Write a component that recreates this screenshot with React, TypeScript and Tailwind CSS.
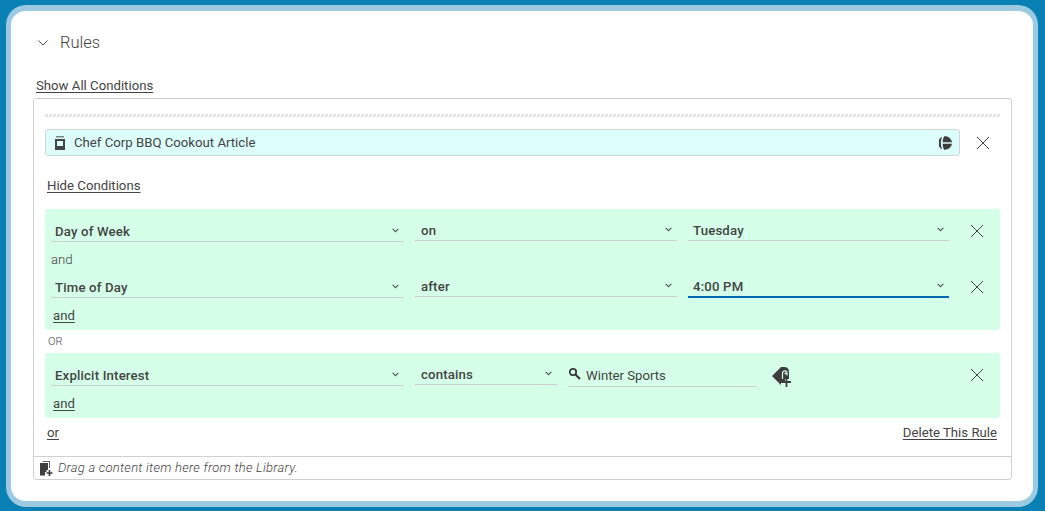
import React from "react";

const Chevron = ({ className = "" }: { className?: string }) => (
  <svg width="7" height="5" viewBox="0 0 7 5" fill="none" stroke="#555" strokeWidth="1.1" className={className}>
    <path d="M0.6 0.8 L3.5 3.7 L6.4 0.8" />
  </svg>
);

const Close = ({ className = "" }: { className?: string }) => (
  <svg width="14" height="14" viewBox="0 0 14 14" fill="none" stroke="#444" strokeWidth="1" className={className}>
    <path d="M1 1 L13 13 M13 1 L1 13" />
  </svg>
);

function Select({ label, w, h = "h-[23px]", active = false, ml = "pl-[5px]", lift = "pb-[1px]" }: { label: string; w: string; h?: string; active?: boolean; ml?: string; lift?: string }) {
  return (
    <div
      className={`${w} ${h} flex items-center justify-between pr-[5px] ${ml} ${lift} shrink-0 ${
        active ? "border-b-2 border-[#0068b0]" : "border-b border-[#cfcfcf]"
      }`}
    >
      <span className="text-[13.2px] text-[#444] leading-[20px] font-medium tracking-[0.17px]">{label}</span>
      <Chevron className="mb-[3px]" />
    </div>
  );
}

function Cond({ children }: { children: React.ReactNode }) {
  return <div className="flex items-start pl-[6px]">{children}</div>;
}

export default function App() {
  return (
    <div
      className="w-[1045px] h-[511px] bg-[#0a80b5] pt-[5px] pl-[6px] pr-[7px] pb-[4px] overflow-hidden text-[#444]"
      style={{ fontFamily: "Roboto, sans-serif" }}
    >
      <div className="h-full border-x-[5px] border-y-[6px] border-[#9ccbe1] rounded-[20px] bg-white pl-[22px] pr-[21px]">
        <div className="flex items-center h-[24px] mt-[20px] ml-[5px]">
          <svg width="10" height="6" viewBox="0 0 10 6" fill="none" stroke="#555" strokeWidth="1">
            <path d="M0.5 0.5 L5 5 L9.5 0.5" />
          </svg>
          <span className="ml-[12px] text-[16.5px] font-light text-[#444] leading-[24px]">Rules</span>
        </div>
        <div className="mt-[21px] ml-[3px] h-[20px] text-[13.2px] leading-[20px] underline underline-offset-2">Show All Conditions</div>
        <div className="mt-[2px] h-[382px] border border-[#d0d0d0] rounded-[3px] flex flex-col">
          <div className="flex-1 px-[11px] pt-[14px]">
            <div
              className="h-[5px] w-[955px]"
              style={{ backgroundImage: "radial-gradient(circle at 1.5px 2.5px, #e4e4e4 1.5px, transparent 1.6px)", backgroundSize: "4px 5px" }}
            />
            <div className="flex items-center mt-[11px]">
              <div className="w-[915px] h-[27px] bg-[#ddfdfa] border border-[#cfd8d8] rounded-[3px] flex items-center pl-[9px] pr-[7px]">
                <svg width="10" height="14" viewBox="0 0 10 14" fill="#444">
                  <path d="M1 0 H9 V1.5 H1 Z" opacity="0.65" />
                  <path d="M0 3 H10 V14 H0 Z M2 5 V10 H8 V5 Z" fillRule="evenodd" />
                </svg>
                <span className="ml-[9px] text-[13.2px] leading-[20px] text-[#444]">Chef Corp BBQ Cookout Article</span>
                <svg width="13" height="14" viewBox="0 0 13 14" className="ml-auto" fill="#3d3d3d">
                  <path d="M3.2 0.8 A6.8 6.8 0 0 0 3.2 13.2 C2.3 11.4 1.9 9.4 1.9 7 C1.9 4.6 2.3 2.6 3.2 0.8 Z" />
                  <path d="M5.2 0.2 C4.2 2 3.7 4 3.6 6.3 H13 A7 7 0 0 0 5.2 0.2 Z" />
                  <path d="M3.6 7.7 C3.7 10 4.2 12 5.2 13.8 A7 7 0 0 0 13 7.7 Z" />
                </svg>
              </div>
              <Close className="ml-[16px]" />
            </div>
            <div className="mt-[20px] ml-[2px] h-[20px] text-[13.2px] leading-[20px] underline underline-offset-2">Hide Conditions</div>

            <div className="mt-[13px] w-[955px] h-[121px] bg-[#d5ffe8] rounded-[3px] pt-[10px]">
              <Cond>
                <Select label="Day of Week" w="w-[353px]" ml="pl-[4px]" h="h-[23px]" lift="pt-[3px]" />
                <div className="w-[11px]" />
                <Select label="on" w="w-[262px]" ml="pl-[6px]" h="h-[22px]" lift="pt-[2px]" />
                <div className="w-[11px]" />
                <Select label="Tuesday" w="w-[261px]" h="h-[22px]" lift="pt-[2px]" />
                <Close className="ml-[21px] mt-[5px]" />
              </Cond>
              <div className="pl-[6px] mt-[8px] h-[20px] text-[13.2px] leading-[20px] font-light">and</div>
              <div className="mt-[5px]">
                <Cond>
                  <Select label="Time of Day" w="w-[353px]" ml="pl-[4px]" lift="pt-[3px]" />
                  <div className="w-[11px]" />
                  <Select label="after" w="w-[262px]" ml="pl-[6px]" h="h-[22px]" lift="pt-[2px]" />
                  <div className="w-[11px]" />
                  <Select label="4:00 PM" w="w-[261px]" active h="h-[23px]" lift="pt-[3px]" />
                  <Close className="ml-[21px] mt-[5px]" />
                </Cond>
              </div>
              <div className="pl-[8px] mt-[8px] h-[20px] text-[13.2px] leading-[20px] underline underline-offset-2">and</div>
            </div>

            <div className="h-[23px] pl-[3px] text-[11px] leading-[24px] font-light">OR</div>

            <div className="w-[955px] h-[65px] bg-[#d5ffe8] rounded-[3px] pt-[10px]">
              <Cond>
                <Select label="Explicit Interest" w="w-[353px]" ml="pl-[4px]" lift="pt-[3px]" />
                <div className="w-[11px]" />
                <Select label="contains" w="w-[142px]" ml="pl-[6px]" h="h-[22px]" lift="pt-[2px]" />
                <div className="w-[11px]" />
                <div className="w-[189px] h-[24px] border-b border-[#cfcfcf] flex items-center shrink-0">
                  <svg width="13" height="13" viewBox="0 0 13 13" fill="none" stroke="#3d3d3d" className="mb-[3px]">
                    <circle cx="5" cy="5" r="3.2" strokeWidth="1.8" />
                    <path d="M7.5 7.5 L12 12" strokeWidth="2.2" />
                  </svg>
                  <span className="ml-[5px] mt-[2px] text-[13.2px] leading-[20px] text-[#444]">Winter Sports</span>
                </div>
                <svg width="22" height="22" viewBox="0 0 22 22" className="ml-[14px] mt-[3px]" fill="#3d3d3d">
                  <path d="M1 10 L10 1 H13 Q18 1 18 6 V13 H14 V17 H10 V19 Z" />
                  <path d="M11.5 13 V6.5 A2.5 2.5 0 0 1 16 6 V9.5" fill="none" stroke="#d5ffe8" strokeWidth="1.2" />
                  <circle cx="14.5" cy="7.5" r="1" fill="#d5ffe8" />
                  <path d="M15.5 11.5 V21 M11 16 H20" stroke="#3d3d3d" strokeWidth="1.8" />
                </svg>
                <Close className="ml-[177px] mt-[5px]" />
              </Cond>
              <div className="pl-[8px] mt-[6px] h-[20px] text-[13.2px] leading-[20px] underline underline-offset-2">and</div>
            </div>

            <div className="flex justify-between mt-[5px] pl-[2px] pr-[3px] text-[13.2px] leading-[20px]">
              <span className="underline underline-offset-2">or</span>
              <span className="underline underline-offset-2">Delete This Rule</span>
            </div>
          </div>
          <div className="h-[23px] border-t border-[#d0d0d0] flex items-center pl-[6px]">
            <svg width="13" height="15" viewBox="0 0 13 15" fill="#3d3d3d">
              <path d="M2.5 0 H10 V7 H9 V1 H2.5 Z" opacity="0.8" />
              <path d="M0 2 H8 V9 H6.5 V11 H5 V14.5 H0 Z" />
              <path d="M9.5 9 V15 M6.5 12 H12.5" stroke="#3d3d3d" strokeWidth="1.7" />
            </svg>
            <span className="ml-[5px] text-[13px] italic font-light text-[#444] tracking-[0.25px]">Drag a content item here from the Library.</span>
          </div>
        </div>
      </div>
    </div>
  );
}
